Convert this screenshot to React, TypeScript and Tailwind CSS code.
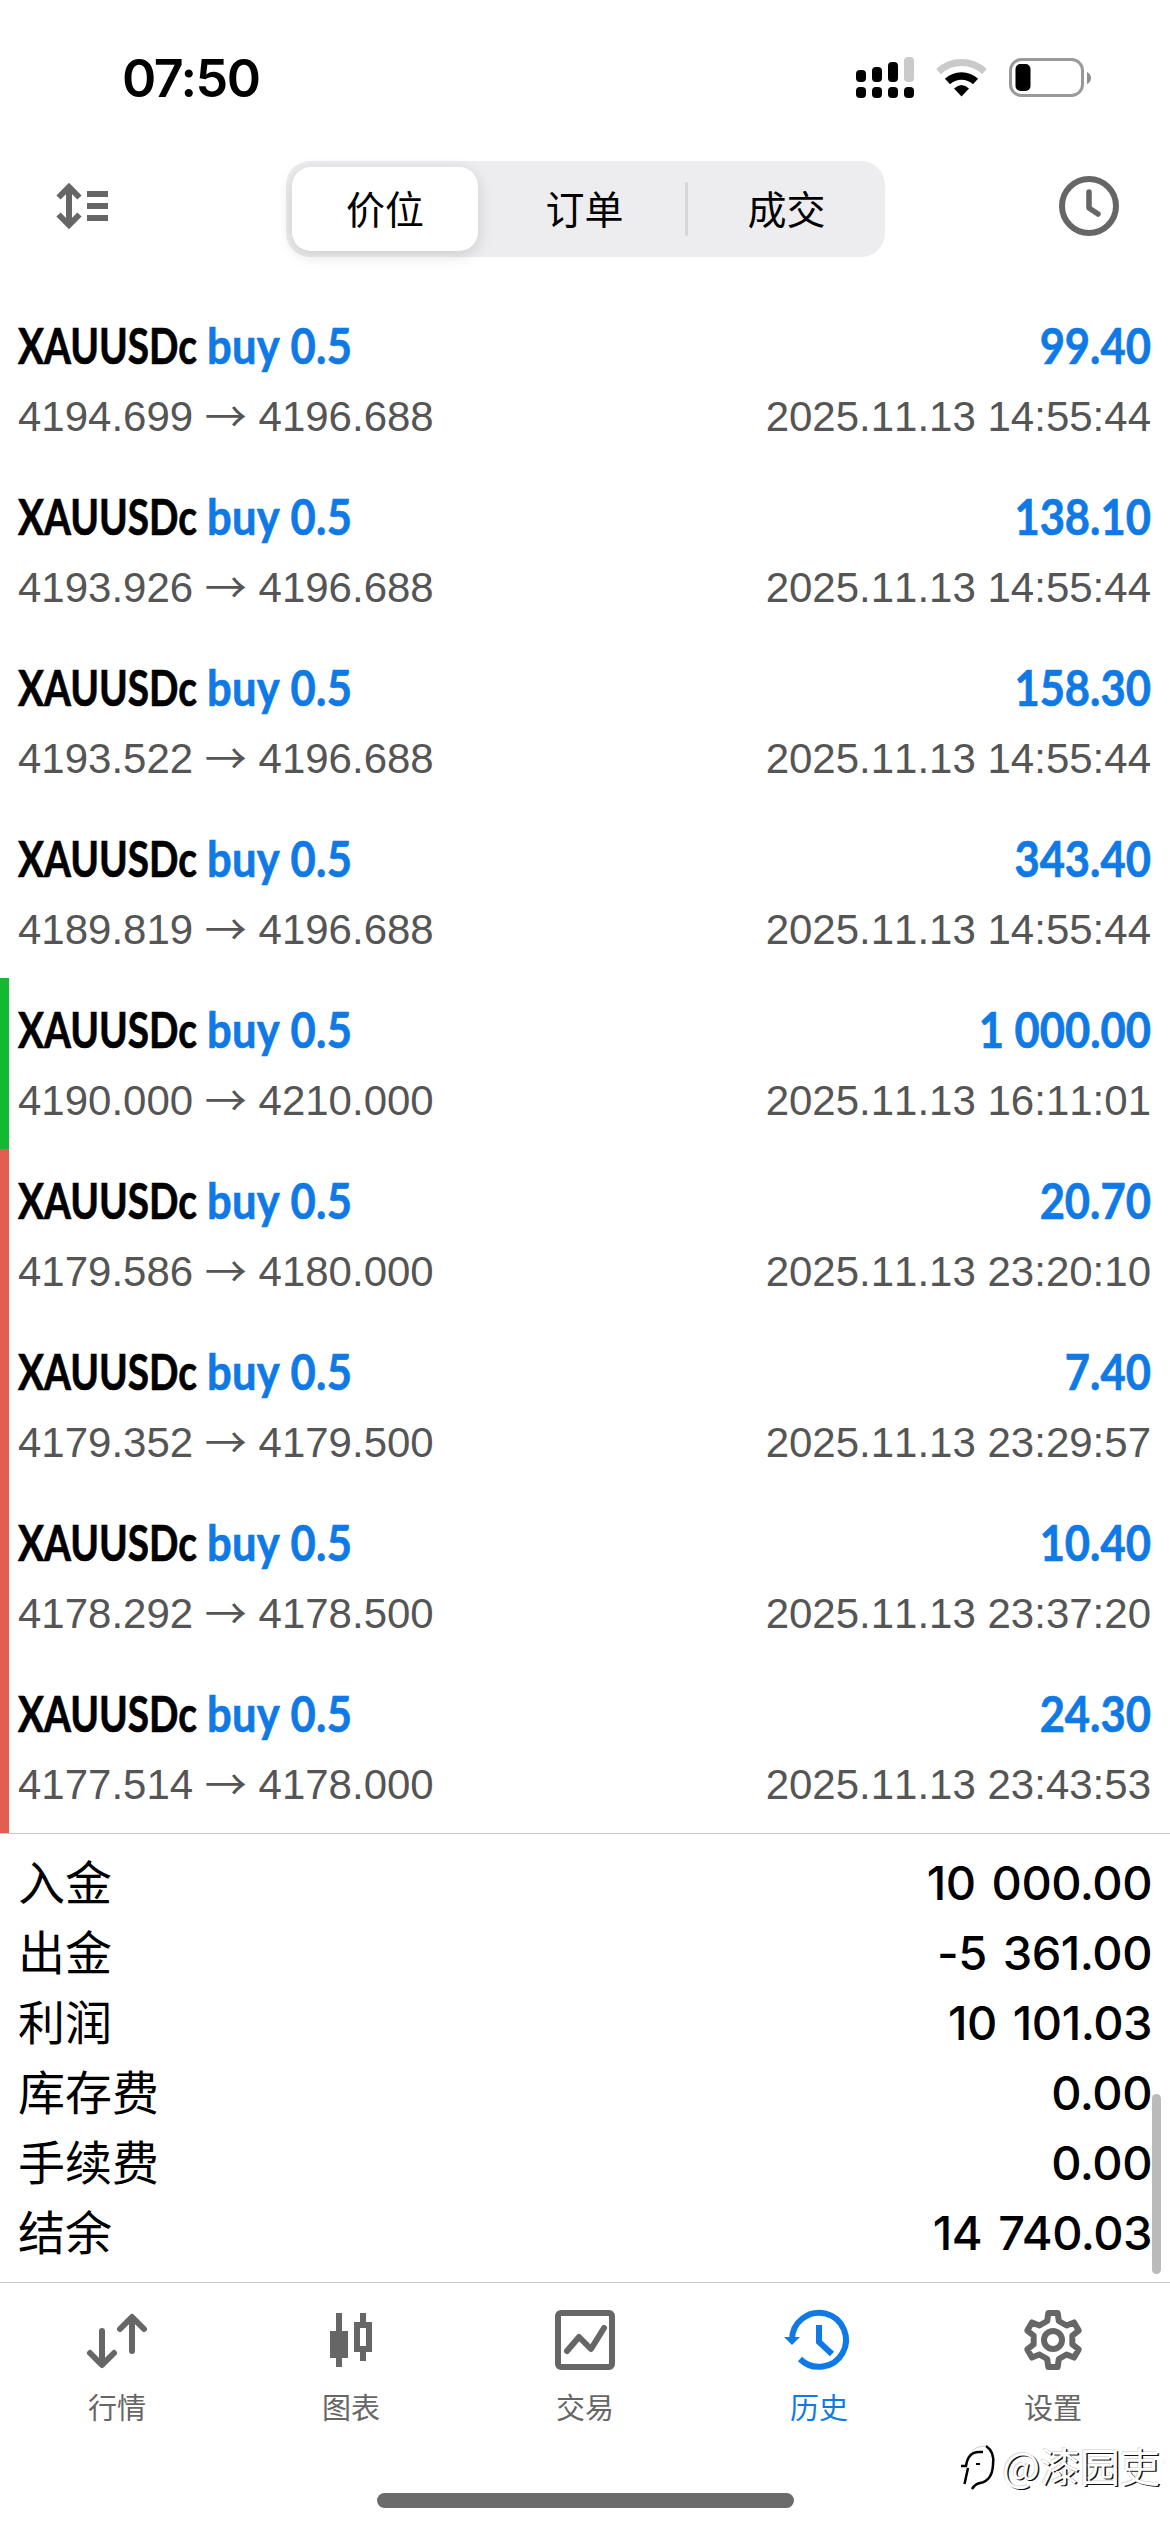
import React from 'react';

const deals = [
  { open: '4194.699', close: '4196.688', profit: '99.40', time: '2025.11.13 14:55:44', bar: '' },
  { open: '4193.926', close: '4196.688', profit: '138.10', time: '2025.11.13 14:55:44', bar: '' },
  { open: '4193.522', close: '4196.688', profit: '158.30', time: '2025.11.13 14:55:44', bar: '' },
  { open: '4189.819', close: '4196.688', profit: '343.40', time: '2025.11.13 14:55:44', bar: '' },
  { open: '4190.000', close: '4210.000', profit: '1 000.00', time: '2025.11.13 16:11:01', bar: 'bg-[#15b831]' },
  { open: '4179.586', close: '4180.000', profit: '20.70', time: '2025.11.13 23:20:10', bar: 'bg-[#e35d50]' },
  { open: '4179.352', close: '4179.500', profit: '7.40', time: '2025.11.13 23:29:57', bar: 'bg-[#e35d50]' },
  { open: '4178.292', close: '4178.500', profit: '10.40', time: '2025.11.13 23:37:20', bar: 'bg-[#e35d50]' },
  { open: '4177.514', close: '4178.000', profit: '24.30', time: '2025.11.13 23:43:53', bar: 'bg-[#e35d50]' },
];

const totals = [
  { label: '入金', value: '10 000.00' },
  { label: '出金', value: '-5 361.00' },
  { label: '利润', value: '10 101.03' },
  { label: '库存费', value: '0.00' },
  { label: '手续费', value: '0.00' },
  { label: '结余', value: '14 740.03' },
];

const StatusBar = () => (
  <div className="h-[155px] flex items-start justify-between pl-[122px] pr-[78px]">
    <div className="mt-[47px] text-[52px] leading-[64px] font-semibold text-black tracking-[-1.5px]">07:50</div>
    <svg className="mt-[55px]" width="236" height="46" viewBox="856 55 236 46">
      <rect x="856" y="70" width="10" height="12" rx="4" />
      <rect x="872" y="67" width="10" height="15" rx="4" />
      <rect x="888" y="62" width="10" height="20" rx="4" />
      <rect x="904" y="57" width="10" height="25" rx="4" fill="#cacaca" />
      {[856, 872, 888, 904].map((x) => (
        <rect key={x} x={x} y="87" width="10" height="11" rx="4" />
      ))}
      <path d="M938.6 71.6A33.5 33.5 0 0 1 984.4 71.6" fill="none" stroke="#cacaca" strokeWidth="7" />
      <path d="M947.500 81.500A20.500 20.500 0 0 1 975.500 81.500" fill="none" stroke="#000" strokeWidth="7.500" />
      <path d="M961.5 96.500L954 88.500Q961.500 81.500 969 88.500Z" />
      <rect x="1010.500" y="59.500" width="72" height="36" rx="11" fill="none" stroke="#999" strokeWidth="3" />
      <rect x="1015.500" y="64" width="15" height="27" rx="5" />
      <path d="M1087 72Q1091 74 1091 78Q1091 82 1087 84Z" fill="#8e8e8e" />
    </svg>
  </div>
);

const Header = () => (
  <div className="h-[139px] flex items-start justify-between pl-[56px] pr-[50px]">
    <svg className="mt-[26px]" width="54" height="50" viewBox="56 181 54 50" fill="none" stroke="#666" strokeWidth="6">
      <path d="M69 187V225M58.500 197.500L69 187L79.500 197.500M58.500 214.500L69 225L79.500 214.500" />
      <path d="M87 194H108M87 206H108M87 218H108" />
    </svg>
    <div className="mt-[6px] ml-[3px] w-[599px] h-[96px] rounded-[24px] bg-[#ededef] p-[6px] flex items-center text-[39px] text-black">
      <div className="w-[186px] h-[84px] pt-[2px] rounded-[19px] bg-white flex items-center justify-center shadow-[0_4px_16px_rgba(0,0,0,0.14)]">
        价位
      </div>
      <div className="w-[207px] h-[84px] pt-[2px] pl-[6px] flex items-center justify-center">订单</div>
      <div className="w-[3px] h-[54px] rounded-full bg-[#d5d5d7]" />
      <div className="flex-1 h-[84px] pt-[2px] pl-[6px] flex items-center justify-center">成交</div>
    </div>
    <svg className="mt-[20px]" width="62" height="62" viewBox="-31 -31 62 62" fill="none" stroke="#666" strokeWidth="6">
      <circle r="27" />
      <path d="M0 -14V2L9 8" strokeLinecap="round" strokeLinejoin="round" strokeWidth="5.500" />
    </svg>
  </div>
);

const DealRow = ({ open, close, profit, time, bar }) => (
  <div className="h-[171px] flex">
    <div className={`w-[9px] ${bar}`} />
    <div className="flex-1 pl-[9px] pr-[19px] pt-[21px]">
      <div className="h-[60px] flex text-[50px] leading-[60px] font-bold font-[Lato,sans-serif] whitespace-nowrap [-webkit-text-stroke:0.7px]">
        <div className="w-[189px] text-black origin-left scale-x-[0.775]">XAUUSDc</div>
        <div className="text-[#0f7ae5] origin-left scale-x-[0.870] tracking-[0.3px] [word-spacing:1px]">buy 0.5</div>
        <div className="ml-auto text-[#0f7ae5] origin-right scale-x-[0.870]">{profit}</div>
      </div>
      <div className="mt-[17px] flex justify-between text-[42px] leading-[50px] text-[#555] [font-kerning:none] font-['Liberation_Sans','Noto_Sans_CJK_SC',sans-serif]">
        <div>
          {open}{' '}
          <span className="relative top-[1px] font-['Noto_Sans_CJK_SC',sans-serif] leading-[0]">→</span> {close}
        </div>
        <div>{time}</div>
      </div>
    </div>
  </div>
);

const Totals = () => (
  <div className="relative h-[449px] border-t border-[#c8c8c8] pt-[14px] pl-[18px] pr-[18px]">
    {totals.map((row) => (
      <div key={row.label} className="h-[70px] flex items-center justify-between text-[47px] text-black">
        <span>{row.label}</span>
        <span className="font-medium tracking-[-0.5px] [word-spacing:4px]">{row.value}</span>
      </div>
    ))}
    {/* scroll indicator over the list edge */}
    <div className="absolute right-[9px] top-[260px] w-[9px] h-[180px] rounded-full bg-[#bababa]" />
  </div>
);

const gearPoints = [0, 60, 120, 180, 240, 300]
  .flatMap((deg) => {
    const a = (deg * Math.PI) / 180;
    return [[-5.8, -19], [-4.7, -27], [4.7, -27], [5.8, -19]].map(
      ([x, y]) => `${x * Math.cos(a) - y * Math.sin(a)},${x * Math.sin(a) + y * Math.cos(a)}`
    );
  })
  .join(' ');

const tabs = [
  {
    label: '行情',
    icon: (
      <path
        d="M-15 -9V24M-27 13L-15 25L-3 13M15 11V-22M3 -11L15 -23L27 -11"
        strokeLinecap="round"
        strokeLinejoin="round"
      />
    ),
  },
  {
    label: '图表',
    icon: (
      <>
        <path d="M-12 -27V27M12 -27V-12M12 9V21" />
        <rect x="-21" y="-9" width="18" height="27" fill="currentColor" stroke="none" />
        <rect x="6" y="-15" width="12" height="24" />
      </>
    ),
  },
  {
    label: '交易',
    icon: (
      <>
        <rect x="-27" y="-27" width="54" height="54" rx="3" />
        <path d="M-18 11L-6 -3L6 9L19 -12" strokeLinecap="round" strokeLinejoin="round" />
      </>
    ),
  },
  {
    label: '历史',
    active: true,
    icon: (
      <>
        <path d="M-27 0A27 27 0 1 1 -19 19" />
        <path d="M0 -15V2L13 14" />
        <path d="M-35 -3H-19L-27 5Z" fill="currentColor" stroke="none" />
      </>
    ),
  },
  {
    label: '设置',
    icon: (
      <>
        <polygon points={gearPoints} strokeLinejoin="round" />
        <circle r="9" />
      </>
    ),
  },
];

const TabBar = () => (
  <div className="h-[211px] border-t border-[#c8c8c8] grid grid-cols-5">
    {tabs.map((tab) => (
      <div
        key={tab.label}
        className={`flex flex-col items-center pt-[21px] ${tab.active ? 'text-[#0f7ae5]' : 'text-[#666]'}`}
      >
        <svg width="72" height="72" viewBox="-36 -36 72 72" fill="none" stroke="currentColor" strokeWidth="6">
          {tab.icon}
        </svg>
        <span className="mt-[13px] text-[29px] leading-[40px]">{tab.label}</span>
      </div>
    ))}
  </div>
);

const Watermark = () => (
  <div className="absolute right-[10px] bottom-[37px] flex items-center text-white">
    <svg className="mr-[1px]" width="42" height="50" viewBox="0 0 42 50" fill="none" stroke="#000" strokeWidth="2">
      <path d="M9 25L5.500 41M2 23H7Q9 9 20 9H24" strokeWidth="2.500" />
      <path d="M17 21H21" />
      <path d="M27 3Q36 9 34 22Q33 38 21 40Q16 41 13 46" strokeWidth="2.500" />
      <path d="M12 10Q16 3 27 3" stroke="#ccc" strokeWidth="1" />
    </svg>
    <span className="text-[40px] leading-[50px] pb-[5px] font-['Noto_Sans_CJK_SC',sans-serif] [text-shadow:1.5px_1px_0_#111,-1px_-1px_0_#ddd]">
      @漆园吏
    </span>
  </div>
);

const App = () => (
  <div className="relative w-[1170px] h-[2532px] overflow-hidden bg-white font-[Inter,'Noto_Sans_CJK_SC',sans-serif]">
    <StatusBar />
    <Header />
    {deals.map((deal, index) => (
      <DealRow key={index} {...deal} />
    ))}
    <Totals />
    <TabBar />
    <div className="mx-auto w-[417px] h-[15px] rounded-full bg-[#6b6b6b]" />
    <Watermark />
  </div>
);

export default App;
